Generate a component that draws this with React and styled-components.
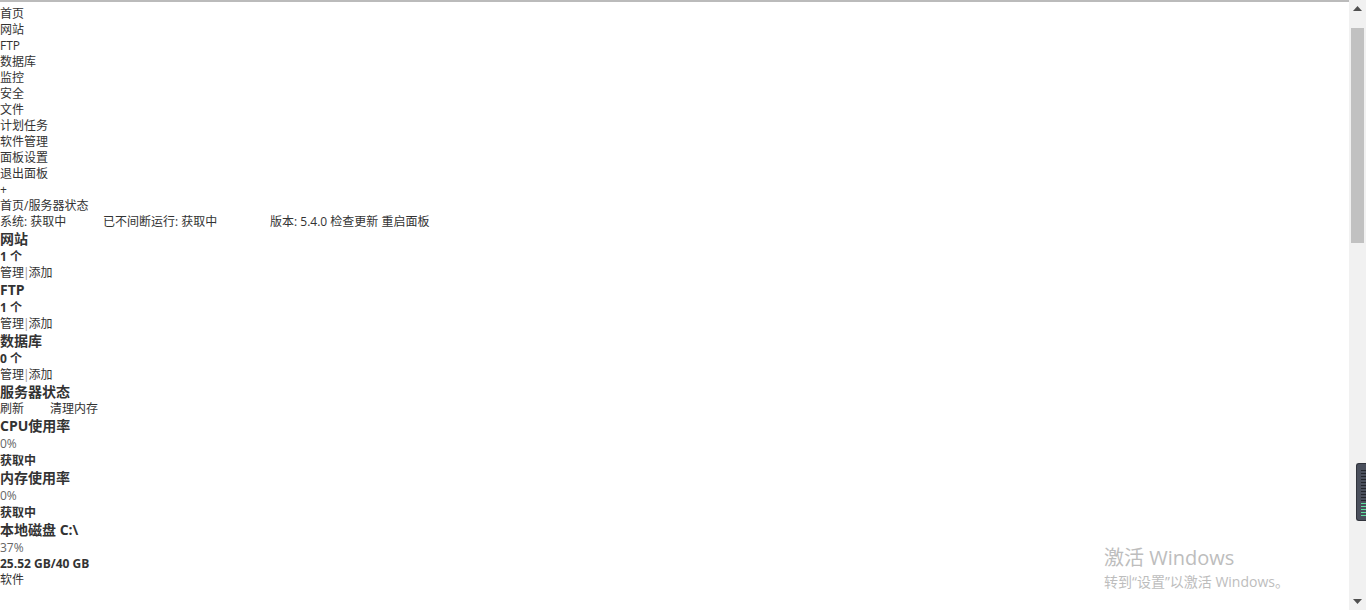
import styled, { createGlobalStyle } from "styled-components";

const GlobalStyle = createGlobalStyle`
  html, body {
    margin: 0;
    padding: 0;
    background: #fff;
    overflow: hidden;
  }
  body {
    font-family: "Open Sans", "Noto Sans CJK SC", sans-serif;
    font-size: 12px;
    color: #333;
  }
`;

const Page = styled.div`
  display: flex;
  height: 610px;
  position: relative;
`;

const Main = styled.div`
  flex: 1;
  border-top: 2px solid #bbb;
  padding-top: 4px;
  overflow: hidden;
`;

const Line = styled.div`
  font-size: 12px;
  line-height: 16px;
  height: 16px;
  white-space: nowrap;
  color: ${(p) => (p.muted ? "#666" : "#333")};
  font-weight: ${(p) => (p.bold ? 700 : 400)};
`;

const Heading = styled.div`
  font-size: 14px;
  font-weight: 700;
  line-height: 18px;
  height: 18px;
  color: #333;
  white-space: nowrap;
`;

const Count = styled.div`
  font-size: 12px;
  line-height: 17px;
  height: 17px;
  color: ${(p) => (p.muted ? "#666" : "#333")};
  font-weight: ${(p) => (p.regular ? 400 : 700)};
`;

const Cell = styled.span`
  display: inline-block;
  width: ${(p) => p.w}px;
`;

const Sep = styled.span`
  color: #999;
  margin: 0 -1px;
`;

const Scrollbar = styled.div`
  width: 17px;
  background: #f1f1f1;
  display: flex;
  flex-direction: column;
  align-items: center;
`;

const ArrowBtn = styled.div`
  height: 17px;
  width: 17px;
  display: flex;
  align-items: center;
  justify-content: center;
`;

const Thumb = styled.div`
  width: 13px;
  height: 215px;
  margin-top: 11px;
  background: #c1c1c1;
`;

const Track = styled.div`
  flex: 1;
`;

const Meter = styled.div`
  position: absolute;
  left: 1356px;
  top: 463px;
  width: 12px;
  height: 58px;
  background: #4a4f5c;
  border: 1px solid #30333b;
  border-right: none;
  border-radius: 3px 0 0 3px;
  display: flex;
  flex-direction: column;
  gap: 2px;
  padding: 6px 0 0 4px;
  box-sizing: border-box;
`;

const Tick = styled.div`
  width: 6px;
  height: 1px;
  flex: none;
  background: ${(p) => (p.on ? "#5fe0a0" : "#23262d")};
`;

const Watermark = styled.div`
  position: absolute;
  left: 1104px;
  top: 545px;
  color: #bdbdbd;
`;

const WmTitle = styled.div`
  font-size: 20px;
  line-height: 26px;
`;

const WmSub = styled.div`
  font-size: 14px;
  line-height: 22px;
`;

const menu = ["首页", "网站", "FTP", "数据库", "监控", "安全", "文件", "计划任务", "软件管理", "面板设置", "退出面板", "+"];

const groups = [
  { name: "网站", count: "1 个" },
  { name: "FTP", count: "1 个" },
  { name: "数据库", count: "0 个" },
];

function Arrow({ down }) {
  return (
    <svg width="9" height="5" viewBox="0 0 9 5">
      <path d={down ? "M0 0h9L4.5 5z" : "M0 5h9L4.5 0z"} fill="#505050" />
    </svg>
  );
}

export default function App() {
  return (
    <>
      <GlobalStyle />
      <Page>
        <Main>
          {menu.map((m) => (
            <Line key={m}>{m}</Line>
          ))}
          <Line>首页/服务器状态</Line>
          <Line>
            <Cell w={103}>系统: 获取中</Cell>
            <Cell w={167}>已不间断运行: 获取中</Cell>
            <span>版本: 5.4.0 检查更新 重启面板</span>
          </Line>
          {groups.map((g) => (
            <div key={g.name}>
              <Heading>{g.name}</Heading>
              <Count>{g.count}</Count>
              <Line>
                管理<Sep>|</Sep>添加
              </Line>
            </div>
          ))}
          <Heading>服务器状态</Heading>
          <Line>
            <Cell w={50}>刷新</Cell>
            <span>清理内存</span>
          </Line>
          <Heading>CPU使用率</Heading>
          <Count regular muted>0%</Count>
          <Count>获取中</Count>
          <Heading>内存使用率</Heading>
          <Count regular muted>0%</Count>
          <Count>获取中</Count>
          <Heading>本地磁盘 C:\</Heading>
          <Count regular muted>37%</Count>
          <Line bold>25.52 GB/40 GB</Line>
          <Line>软件</Line>
        </Main>
        <Scrollbar>
          <ArrowBtn>
            <Arrow />
          </ArrowBtn>
          <Thumb />
          <Track />
          <ArrowBtn>
            <Arrow down />
          </ArrowBtn>
        </Scrollbar>
        <Meter>
          {Array.from({ length: 16 }).map((_, i) => (
            <Tick key={i} on={i >= 11} />
          ))}
        </Meter>
        <Watermark>
          <WmTitle>激活 Windows</WmTitle>
          <WmSub>转到“设置”以激活 Windows。</WmSub>
        </Watermark>
      </Page>
    </>
  );
}
